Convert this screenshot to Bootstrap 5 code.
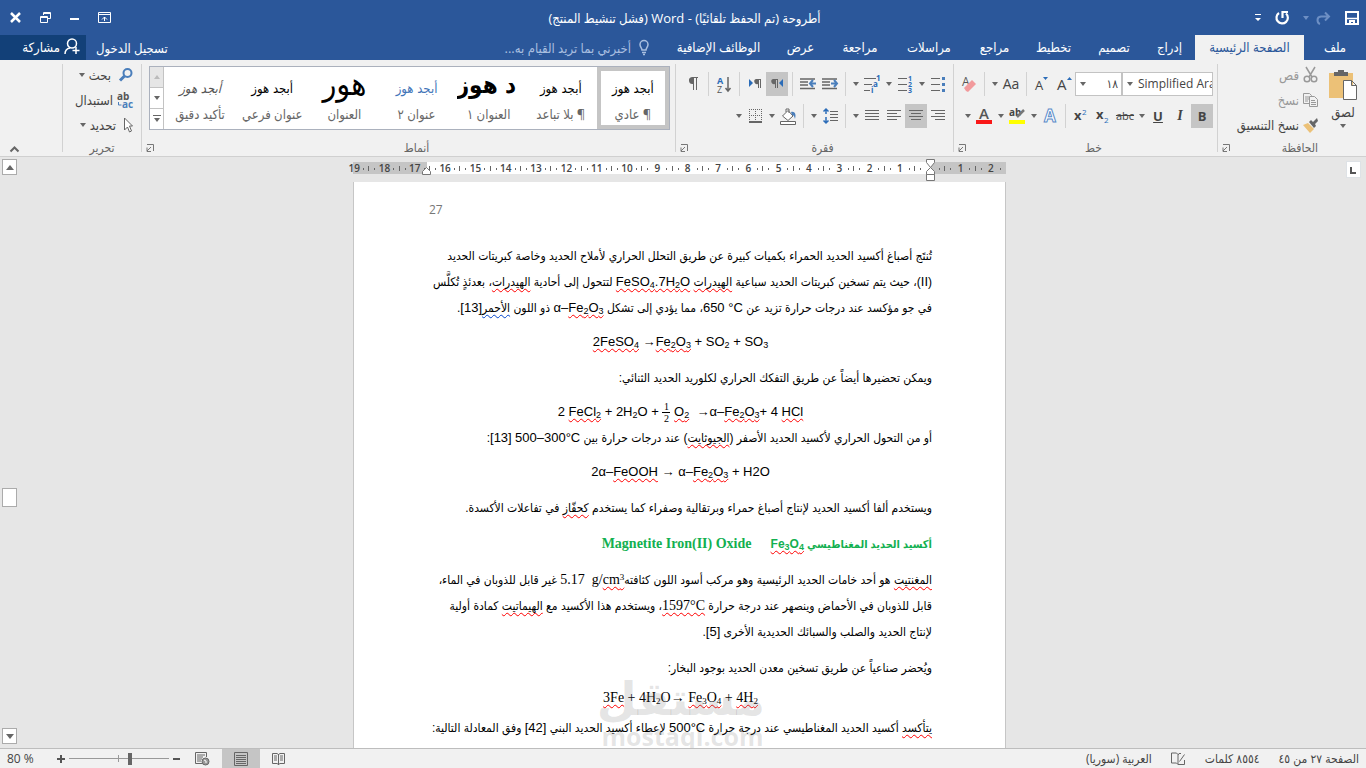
<!DOCTYPE html>
<html lang="ar" dir="rtl">
<head>
<meta charset="utf-8">
<meta name="viewport" content="width=device-width, initial-scale=1">
<title>أطروحة - Word</title>
<link href="https://cdn.jsdelivr.net/npm/bootstrap@5.3.0/dist/css/bootstrap.min.css" rel="stylesheet">
<style>
:root{--blue:#2b579a;--ink:#444;--chrome:#f1f1f1;--line:#d2d2d2;--on:#c5c5c5}
body{font-family:"Open Sans","DejaVu Sans Condensed","DejaVu Sans",sans-serif;font-size:13px;line-height:16px;color:var(--ink);background:#e6e6e6;overflow:hidden}
button{border:0;background:none;padding:0;color:inherit;font:inherit;line-height:inherit;white-space:nowrap}
svg{display:block;flex:none;direction:ltr;overflow:visible}
.titlebar{background:var(--blue);color:#fff;height:35px}
.side{flex:1 1 0;height:26px}
.quick{padding-right:7px;gap:14px}
.winbtns{padding-left:10px;gap:19px}
.redo{gap:7px}
.tabs{background:var(--blue);color:#fff;height:25px}
.tabgrid{display:grid;grid-template-columns:62px 109px 51px 60px 61px 57px 74px 64px 55px 109px;height:25px}
.tabgrid button{height:25px;padding-bottom:2px}
.tabgrid .on{background:var(--chrome);color:var(--blue)}
.tell{color:#a9bfe0;margin-right:15px}
.signin{padding:0 14px 0 10px}
.share{background:#124078;width:86px;height:25px;padding:0 6px 2px 0}
.ribbon{background:var(--chrome);height:97px;border-bottom:1px solid #d0d0d0;padding-top:4px}
.grp{position:relative;height:88px;border-left:1px solid var(--line);flex:none;padding:0 4px}
.cap{position:absolute;bottom:-4px;left:16px;right:0;text-align:center;color:#666;font-size:12px}
.g-edit .cap{left:0}
.g-clip .cap{right:48px;left:auto}
.launch{position:absolute;bottom:-4px;left:4px}
.g-clip{width:149px;padding-right:8px}.g-font{width:264px}.g-para{width:278px}.g-edit{width:79px}.g-end{width:62px}
.paste{width:30px;padding-top:5px}
.paste span{margin:3px 0 4px}
.stack{padding:3px 10px 0 0;gap:9px}
.g-edit .stack{padding-right:4px}
.off{color:#999}
.tools{height:24px;display:flex;align-items:center;margin-top:8px}
.tb{width:22px;height:24px;display:flex;align-items:center;justify-content:center}
.tb.on{background:var(--on)}
.tb-i{font:italic 700 14px "Liberation Serif",serif}
.tb-aa{font-size:14px}
.tb-abc{font-size:11px}
.ar{width:11px;height:24px;display:flex;align-items:center;justify-content:center}
.ar::after,.caret::after{content:"";display:block;border:3px solid transparent;border-top:4px solid #666;border-bottom:0}
.vs{width:1px;height:24px;background:var(--line);margin:0 4px}
.pick{position:relative;background:#fff;border:1px solid #c3c3c3;height:24px}
.pick select{appearance:none;border:0;background:none;width:100%;height:22px;padding:0 3px 0 0;font:inherit;font-size:12px;color:var(--ink);display:block}
.pick-font{width:91px}.pick-size{width:47px}
.pick-font select{padding:0 0 0 15px}
.pick::after{content:"";position:absolute;left:4px;top:9px;border:3px solid transparent;border-top:4px solid #666;border-bottom:0;pointer-events:none}
.gallery{height:64px;background:#fff;border:1px solid #abb1bd;margin:2px 1px 0 3px}
.sty{flex:1 1 0;min-width:0;height:62px;border:4px solid transparent;overflow:hidden;display:flex;flex-direction:column;align-items:center}
.sty.on{border-color:var(--on)}
.sty b{font:13px/36px "DejaVu Sans Condensed","DejaVu Sans",sans-serif;color:#000;height:35px;white-space:nowrap;display:flex;justify-content:center;width:64px;overflow:hidden}
.sty .h-one{font-size:24px;line-height:28px;font-weight:700;justify-content:flex-end}
.sty .h-two{color:#3f74b8}
.sty .h-title{font-size:32px;line-height:26px}
.sty .h-em{color:#555;font-style:italic}
.sty span{line-height:16px;color:#666}
.scr{width:14px;border-right:1px solid #c3c3c3}
.scr button{flex:1;display:flex;align-items:center;justify-content:center;border-bottom:1px solid #c3c3c3}
.scr button:first-child{background:#e6e6e6}
.fold{position:absolute;left:10px;bottom:4px}
.rulerrow{height:25px;padding:5px 25px 0 18px}
.tabsel{position:absolute;right:5px;top:4px;width:15px;height:17px}
.sheetw{width:653px;flex:none}
.ruler{height:12px;position:relative;background:linear-gradient(to left,var(--on) 76px,#fff 76px,#fff 579px,var(--on) 579px)}
.cms{display:grid;grid-template-columns:repeat(22,1fr);width:667px;font-size:10px;font-weight:600;line-height:12px;height:12px}
.cms span{text-align:center;background-image:linear-gradient(#666,#666),linear-gradient(#666,#666),linear-gradient(#666,#666);background-repeat:no-repeat;background-position:right 4px,5px 6px,24px 6px;background-size:1px 5px,1px 2px,1px 2px}
.cms span:first-child{background-size:0 0,1px 2px,1px 2px}
.cms span:last-child{background-size:1px 5px,0 0,1px 2px}
.ind0{position:absolute;right:70px;top:-3px}
.ind1{position:absolute;left:69px;top:4px}
.desk{min-height:0}
.edge{width:25px;flex:none}
.vbar{width:18px;flex:none;padding:0 1px;margin-top:-23px;position:relative}
.above{flex:315 1 0}.below{flex:223 1 0}
.sbtn{width:15px;height:16px;background:#fff;border:1px solid #ababab;display:flex;align-items:center;justify-content:center}
.thumb{height:19px}
.paper{background:#fff;border:solid #c6c6c6;border-width:0 1px;padding:20px 73px 0 75px;color:#000;font-family:"Liberation Sans","DejaVu Sans Condensed","DejaVu Sans",sans-serif;font-size:12px;line-height:26px;white-space:nowrap;position:relative;overflow:hidden}
.paper p{margin:0;height:26px;box-sizing:content-box}
.paper bdi{font-size:13px}
.paper .eq{direction:ltr;text-align:center;font-size:13px}
.paper .s1{padding-top:8px}.paper .s2{padding-top:10px}.paper .s0{padding-top:4px}
.paper .rom{font-family:"Liberation Serif","DejaVu Sans Condensed",serif;font-size:14px}
.sq{text-decoration:underline wavy #f00 1px;text-underline-offset:2px;text-decoration-skip-ink:none}
.sqb{text-decoration-color:#04c}
.paper sub,.paper sup{font-size:9px;line-height:0}
.paper .green{color:#12b050;font-size:11px}
.paper .green .sq{font-size:12px}
.gapr{margin-right:16px}
.frac{display:inline-flex;flex-direction:column;vertical-align:middle;font:10px/11px "Liberation Serif",serif;text-align:center;width:8px}
.frac span:first-child{border-bottom:1px solid #000}
.paper .pgno{direction:ltr;text-align:left;color:#777;font:12px/16px "Open Sans",sans-serif;height:41px}
.wm{position:absolute;left:246px;top:492px;width:165px;text-align:center;color:rgba(120,120,120,.2);pointer-events:none}
.wm div{font:700 46px/50px "DejaVu Sans",sans-serif}
.wm p{font:700 25px/24px "Open Sans",sans-serif;direction:ltr}
.status{height:20px;background:var(--chrome);border-top:1px solid #bdbdbd;flex:none;padding:0 7px;font-size:12px}
.stats{gap:19px}
.zoomer{gap:4px;margin-right:4px}
.pct{margin-right:19px}
.zoomr{appearance:none;width:100px;height:12px;margin:0;background:linear-gradient(#999,#999) center/1px 7px no-repeat,linear-gradient(#999,#999) center/100% 1px no-repeat;direction:ltr}
.zoomr::-webkit-slider-thumb{appearance:none;width:4px;height:12px;background:#666}
.vw{width:38px;height:19px;display:flex;align-items:center;justify-content:center}
.vw.on{background:var(--on)}
</style>
</head>
<body class="d-flex flex-column vh-100">

<header class="titlebar d-flex align-items-center">
  <div class="side quick d-flex align-items-center">
    <button aria-label="حفظ"><svg width="14" height="14" fill="none" stroke="#fff"><path d="M1 1h12v12H1z" stroke-width="2"/><path d="M2 7.500h10" stroke-width="1.500"/><path fill="#fff" stroke="none" d="M4 9h6v5H8v-3H6v3H4z"/></svg></button>
    <button class="redo d-flex align-items-center" aria-label="إعادة"><svg width="15" height="14" fill="none" stroke="#6d8fc4" stroke-width="2"><path d="M4 13c-3-1-4-7 1-7.500h8M9 1.500l4 4-4 4"/></svg><svg width="6" height="4" fill="#6d8fc4"><path d="M0 0h6L3 4z"/></svg></button>
    <button aria-label="تراجع"><svg width="14" height="15" fill="none" stroke="#fff" stroke-width="2.200"><path d="M4 3a5.700 5.700 0 1 0 7 .5M7.500 8V2H13"/></svg></button>
    <button aria-label="تخصيص"><svg width="6" height="8" fill="#fff"><path d="M0 0h6v1H0zM0 4h6L3 7z"/></svg></button>
  </div>
  <div>أطروحة (تم الحفظ تلقائيًا) - Word (فشل تنشيط المنتج)</div>
  <div class="side winbtns d-flex align-items-center justify-content-end">
    <button aria-label="خيارات عرض الشريط"><svg width="13" height="11" fill="none" stroke="#fff"><path d="M.5.5h12v10H.5zM.5 2.500h12M6.500 9V5M4 7.500l2.500-2.500L9 7.500"/></svg></button>
    <button aria-label="تصغير"><svg width="9" height="8"><path fill="#fff" d="M0 4h9v2H0z"/></svg></button>
    <button aria-label="استعادة"><svg width="11" height="11" fill="none" stroke="#fff"><path d="M3.500 3V.5h7v6H8M3 1.500h8M.5 4.500h7v6h-7zM0 5.500h8"/></svg></button>
    <button aria-label="إغلاق"><svg width="11" height="11" stroke="#fff" stroke-width="2.500"><path d="M1 1l9 9M10 1l-9 9"/></svg></button>
  </div>
</header>

<nav class="tabs d-flex align-items-center">
  <div class="tabgrid">
    <button>ملف</button><button class="on">الصفحة الرئيسية</button><button>إدراج</button><button>تصميم</button><button>تخطيط</button><button>مراجع</button><button>مراسلات</button><button>مراجعة</button><button>عرض</button><button>الوظائف الإضافية</button>
  </div>
  <button class="tell d-flex align-items-center gap-2"><svg width="10" height="15" fill="none" stroke="#a9bfe0" stroke-width="1.500"><path d="M3 10C3 8 1 7 1 4.500a4 4 0 0 1 8 0C9 7 7 8 7 10zM3 12.500h4M4 14.500h2"/></svg>أخبرني بما تريد القيام به...</button>
  <div class="flex-grow-1"></div>
  <button class="signin">تسجيل الدخول</button>
  <button class="share d-flex align-items-center gap-1"><svg width="16" height="17" fill="none" stroke="#fff" stroke-width="1.500"><circle cx="8" cy="5.500" r="4.500"/><path d="M1 16c0-3 2-5.500 5-6M12 9v7M8.500 12.500h7"/></svg>مشاركة</button>
</nav>

<section class="ribbon d-flex">
  <div class="grp g-clip d-flex">
    <button class="paste caret d-flex flex-column align-items-center"><svg width="28" height="32"><path fill="#ecc177" d="M0 4h24v25H0z"/><path fill="#666" d="M5 3h4V1h6v2h4v4H5z"/><path fill="#fff" stroke="#666" d="M14.500 11.500h8l5 5v14h-13zM22.500 11.500v5h5"/></svg><span>لصق</span></button>
    <div class="stack d-flex flex-column">
      <button class="off d-flex align-items-center gap-1"><svg width="15" height="16" fill="none" stroke="#999" stroke-width="1.500"><path d="M3 0l6 10M12 0L6 10"/><circle cx="4" cy="12" r="2.800"/><circle cx="11" cy="12" r="2.800"/></svg>قص</button>
      <button class="off d-flex align-items-center gap-1"><svg width="15" height="14" fill="#f1f1f1" stroke="#999"><path d="M.5.5h6l2 2v8h-8zM2 4h4M2 6h4M2 8h3"/><path d="M6.500 3.500h5l3 3v7h-8zM8 7.500h4M8 9.500h5M8 11.500h5"/></svg>نسخ</button>
      <button class="d-flex align-items-center gap-1"><svg width="15" height="15"><path fill="#ecc177" d="M0 7l5-2 6 6-4 4z"/><path fill="#666" d="M6 4l2-2 2 2 4-4 1 3-3 3 1 2-2 2z"/></svg>نسخ التنسيق</button>
    </div>
    <div class="cap">الحافظة</div>
    <button class="launch" aria-label="خيارات الحافظة"><svg width="8" height="16" fill="none" stroke="#777"><path d="M1 4.500h6.500V11M5 7l-4 4M1 7.500v4h4"/></svg></button>
  </div>

  <div class="grp g-font">
    <div class="tools">
      <div class="pick pick-font" dir="ltr"><select aria-label="الخط"><option>Simplified Arabic</option></select></div>
      <div class="pick pick-size"><select aria-label="حجم الخط"><option>١٨</option></select></div>
      <button class="tb" aria-label="تكبير"><svg width="15" height="18"><text x="0" y="15" font-size="15" fill="#444">A</text><path fill="#2b6cb8" d="M10 5h5l-2.500-3z"/></svg></button>
      <button class="tb" aria-label="تصغير الخط"><svg width="14" height="18"><text x="0" y="15" font-size="13" fill="#444">A</text><path fill="#2b6cb8" d="M8 2h5l-2.500 3z"/></svg></button>
      <i class="vs"></i>
      <button class="tb tb-aa">Aa</button><button class="ar" aria-label="حالة الأحرف"></button>
      <i class="vs"></i>
      <button class="tb" aria-label="مسح"><svg width="15" height="18"><text x="0" y="11" font-size="12" fill="#555">A</text><path fill="#f29a9c" d="M2 13l8-8 4 4-8 8-2-1z"/></svg></button>
    </div>
    <div class="tools">
      <button class="tb on fw-bold">B</button><button class="tb tb-i">I</button><button class="tb fw-bold text-decoration-underline">U</button><button class="ar" aria-label="أنماط التسطير"></button>
      <button class="tb tb-abc text-decoration-line-through">abc</button>
      <button class="tb" aria-label="منخفض"><svg width="14" height="16"><text x="0" y="11" font-size="13" font-weight="700" fill="#444">x</text><text x="8" y="15" font-size="8" fill="#2b6cb8">2</text></svg></button>
      <button class="tb" aria-label="مرتفع"><svg width="14" height="16"><text x="0" y="12" font-size="13" font-weight="700" fill="#444">x</text><text x="8" y="7" font-size="8" fill="#2b6cb8">2</text></svg></button>
      <i class="vs"></i>
      <button class="tb" aria-label="تأثيرات"><svg width="16" height="16"><text x="2" y="14" font-size="17" font-weight="700" fill="#fff" stroke="#5b8bc9">A</text></svg></button><button class="ar" aria-label="قائمة التأثيرات"></button>
      <button class="tb" aria-label="تمييز"><svg width="17" height="18"><text x="0" y="9" font-size="10" font-weight="700" fill="#444">ab</text><path stroke="#777" stroke-width="2.500" d="M8 10l7-7"/><path fill="#ff0" d="M0 13h16v4H0z"/></svg></button><button class="ar" aria-label="لون التمييز"></button>
      <button class="tb" aria-label="لون الخط"><svg width="16" height="18"><text x="3" y="12" font-size="15" font-weight="600" fill="#555">A</text><path fill="#f91818" d="M0 13h16v4H0z"/></svg></button><button class="ar" aria-label="ألوان"></button>
    </div>
    <div class="cap">خط</div>
    <button class="launch" aria-label="خيارات الخط"><svg width="8" height="16" fill="none" stroke="#777"><path d="M1 4.500h6.500V11M5 7l-4 4M1 7.500v4h4"/></svg></button>
  </div>

  <div class="grp g-para">
    <div class="tools">
      <button class="tb" aria-label="نقاط"><svg width="14" height="16"><path stroke="#666" d="M0 2.500h9M0 8.500h9M0 14.500h9"/><path fill="#4a7ebb" d="M11 1h3v3h-3zM11 7h3v3h-3zM11 13h3v3h-3z"/></svg></button><button class="ar" aria-label="قائمة النقاط"></button>
      <button class="tb" aria-label="ترقيم"><svg width="15" height="18"><path stroke="#666" d="M0 3.500h9M0 9.500h9M0 15.500h9"/><g font-size="7" font-weight="700" fill="#2b6cb8"><text x="10" y="6">1</text><text x="10" y="12">2</text><text x="10" y="18">3</text></g></svg></button><button class="ar" aria-label="قائمة الترقيم"></button>
      <button class="tb" aria-label="متعدد المستويات"><svg width="17" height="18"><path stroke="#666" d="M0 3.500h12M0 9.500h8M0 15.500h6"/><g font-size="8" font-weight="700" fill="#2b6cb8"><text x="12" y="6">1</text><text x="9" y="12">a</text><text x="7" y="18">i</text></g></svg></button><button class="ar" aria-label="قائمة المستويات"></button>
      <i class="vs"></i>
      <button class="tb" aria-label="إنقاص المسافة البادئة"><svg width="16" height="12"><path stroke="#666" stroke-width="1.500" d="M0 1h15M0 4h8M0 7h8M0 10.500h15"/><path fill="none" stroke="#4a7ebb" stroke-width="2" d="M9 5.500h6M12 2l3 3.500L12 9"/></svg></button>
      <button class="tb" aria-label="زيادة المسافة البادئة"><svg width="16" height="12"><path stroke="#666" stroke-width="1.500" d="M0 1h15M0 4h8M0 7h8M0 10.500h15"/><path fill="none" stroke="#4a7ebb" stroke-width="2" d="M10 5.500h6M13 2l-3 3.500L13 9"/></svg></button>
      <i class="vs"></i>
      <button class="tb on" aria-label="من اليمين إلى اليسار"><svg width="14" height="12"><path fill="#666" d="M3 1h5v9H7V2H6v8H5V6a2.500 2.500 0 0 1-2-5z"/><path fill="#2b6cb8" d="M13 1v8L9 5z"/></svg></button>
      <button class="tb" aria-label="من اليسار إلى اليمين"><svg width="14" height="12"><path fill="#666" d="M8 1h5v9h-1V2h-1v8h-1V6a2.500 2.500 0 0 1-2-5z"/><path fill="#2b6cb8" d="M1 1v8l4-4z"/></svg></button>
      <i class="vs"></i>
      <button class="tb" aria-label="فرز"><svg width="15" height="17"><text x="0" y="8" font-size="9" font-weight="700" fill="#2b6cb8">A</text><text x="0" y="17" font-size="9" fill="#555">Z</text><path fill="none" stroke="#666" stroke-width="1.500" d="M11 1v14M8.500 12l2.500 3 2.500-3"/></svg></button>
      <i class="vs"></i>
      <button class="tb" aria-label="علامات الفقرة"><svg width="10" height="14"><path fill="#666" d="M4 0h6v1H9v12H8V1H6v12H5V7a3.500 3.500 0 0 1-1-7z"/></svg></button>
    </div>
    <div class="tools">
      <button class="tb" aria-label="محاذاة لليمين"><svg width="14" height="12"><path stroke="#666" d="M0 .5h14M4 3.500h10M0 6.500h14M4 9.500h10"/></svg></button>
      <button class="tb on" aria-label="توسيط"><svg width="14" height="12"><path stroke="#666" d="M0 .5h14M2 3.500h10M0 6.500h14M2 9.500h10"/></svg></button>
      <button class="tb" aria-label="محاذاة لليسار"><svg width="14" height="12"><path stroke="#666" d="M0 .5h14M0 3.500h10M0 6.500h14M0 9.500h10"/></svg></button>
      <button class="tb" aria-label="ضبط"><svg width="14" height="12"><path stroke="#666" d="M0 .5h14M0 3.500h14M0 6.500h14M0 9.500h14"/></svg></button><button class="ar" aria-label="خيارات الضبط"></button>
      <i class="vs"></i>
      <button class="tb" aria-label="تباعد الأسطر"><svg width="15" height="16"><path stroke="#666" d="M7 3.500h8M7 6.500h8M7 9.500h8M7 12.500h8"/><path fill="none" stroke="#2b6cb8" stroke-width="1.500" d="M3 1v5M3 9v6M.5 3.500L3 1l2.500 2.500M.5 12.500L3 15l2.500-2.500"/></svg></button><button class="ar" aria-label="خيارات التباعد"></button>
      <i class="vs"></i>
      <button class="tb" aria-label="تظليل"><svg width="17" height="17"><path fill="#fff" stroke="#666" d="M2.500 8L8 2.500 13 8l-5 4.500zM6 4V1h3v4"/><path fill="#4a7ebb" d="M11 4c5-1 5 4 4 7-1-3-1-4-3-4z"/><path fill="#fff" stroke="#666" d="M.5 13.500h15v3H.5z"/></svg></button><button class="ar" aria-label="ألوان التظليل"></button>
      <button class="tb" aria-label="حدود"><svg width="13" height="14" fill="none" stroke="#666"><path stroke-dasharray="1 1" d="M0 .5h13M0 6.500h13M.5 0v13M6.500 0v13M12.500 0v13"/><path stroke-width="2" d="M0 13h13"/></svg></button><button class="ar" aria-label="خيارات الحدود"></button>
    </div>
    <div class="cap">فقرة</div>
    <button class="launch" aria-label="خيارات الفقرة"><svg width="8" height="16" fill="none" stroke="#777"><path d="M1 4.500h6.500V11M5 7l-4 4M1 7.500v4h4"/></svg></button>
  </div>

  <div class="grp flex-grow-1">
    <div class="gallery d-flex">
      <button class="sty on"><b>أبجد هوز</b><span>¶ عادي</span></button>
      <button class="sty"><b>أبجد هوز</b><span>¶ بلا تباعد</span></button>
      <button class="sty"><b class="h-one">د هوز</b><span>العنوان ١</span></button>
      <button class="sty"><b class="h-two">أبجد هوز</b><span>عنوان ٢</span></button>
      <button class="sty"><b class="h-title">هور</b><span>العنوان</span></button>
      <button class="sty"><b>أبجد هوز</b><span>عنوان فرعي</span></button>
      <button class="sty"><b class="h-em">أبجد هوز</b><span>تأكيد دقيق</span></button>
      <div class="scr d-flex flex-column">
        <button aria-label="أعلى"><svg width="6" height="4" fill="#bbb"><path d="M0 4h6L3 0z"/></svg></button>
        <button aria-label="أسفل"><svg width="6" height="4" fill="#666"><path d="M0 0h6L3 4z"/></svg></button>
        <button class="border-0" aria-label="المزيد"><svg width="8" height="8" fill="#666"><path d="M0 0h8v1H0zM1 3h6L4 7z"/></svg></button>
      </div>
    </div>
    <div class="cap">أنماط</div>
    <button class="launch" aria-label="خيارات الأنماط"><svg width="8" height="16" fill="none" stroke="#777"><path d="M1 4.500h6.500V11M5 7l-4 4M1 7.500v4h4"/></svg></button>
  </div>

  <div class="grp g-edit">
    <div class="stack d-flex flex-column">
      <button class="caret d-flex align-items-center gap-1"><svg width="14" height="14" fill="none" stroke="#4a7ebb" stroke-width="2"><circle cx="8.500" cy="5" r="4"/><path stroke-width="3" d="M5.500 8L1 12.500"/></svg><span class="me-1">بحث</span></button>
      <button class="d-flex align-items-center gap-1"><svg width="16" height="16" font-size="10" font-weight="700"><text x="0" y="8" fill="#555">ab</text><text x="5" y="16" fill="#4a7ebb">ac</text><path fill="none" stroke="#4a7ebb" d="M1.500 10v3h3"/></svg>استبدال</button>
      <button class="caret d-flex align-items-center gap-1"><svg width="13" height="16" fill="#fff" stroke="#666"><path d="M4.500 1v12l3-3 2 5 2-1-2-5h3z"/></svg>تحديد</button>
    </div>
    <div class="cap">تحرير</div>
  </div>
  <div class="g-end position-relative flex-shrink-0"><button class="fold" aria-label="طي الشريط"><svg width="9" height="6" fill="none" stroke="#666" stroke-width="2"><path d="M.5 5.500l4-4 4 4"/></svg></button></div>
</section>

<div class="rulerrow d-flex justify-content-center position-relative">
  <div class="ruler sheetw">
    <div class="cms"><span>2</span><span>1</span><span></span><span>1</span><span>2</span><span>3</span><span>4</span><span>5</span><span>6</span><span>7</span><span>8</span><span>9</span><span>10</span><span>11</span><span>12</span><span>13</span><span>14</span><span>15</span><span>16</span><span>17</span><span>18</span><span>19</span></div>
    <svg class="ind0" width="10" height="23" fill="#fff" stroke="#777"><path d="M.5.5h8v3l-4 5-4-5zM.5 15.500v-3l4-4 4 4v3zM.5 15.500h8v6h-8z"/></svg>
    <svg class="ind1" width="10" height="10" fill="#fff" stroke="#777"><path d="M.5 8.500v-3L4.500 1.500l4 4v3z"/></svg>
  </div>
  <button class="tabsel bg-white border" aria-label="نوع علامة الجدولة"><svg width="13" height="15" fill="none" stroke="#555" stroke-width="2"><path d="M4 5v6h5"/></svg></button>
</div>

<main class="desk d-flex flex-fill">
  <div class="edge"></div>
  <div class="flex-grow-1 d-flex justify-content-center">
    <article class="paper sheetw">
      <p class="pgno">27</p>
      <p>تُنتَج أصباغ أكسيد الحديد الحمراء بكميات كبيرة عن طريق التحلل الحراري لأملاح الحديد وخاصة كبريتات الحديد</p>
      <p>(<bdi>II</bdi>)، حيث يتم تسخين كبريتات الحديد سباعية <span class="sq">الهيدرات</span> <bdi class="sq" dir="ltr">FeSO<sub>4</sub>.7H<sub>2</sub>O</bdi> لتتحول إلى أحادية <span class="sq">الهيدرات</span>، بعدئذٍ تُكلَّس</p>
      <p>في جو مؤكسد عند درجات حرارة تزيد عن <bdi dir="ltr">650 °C</bdi>، مما يؤدي إلى تشكل <bdi dir="ltr">α–<span class="sq">Fe<sub>2</sub>O<sub>3</sub></span></bdi> ذو اللون <span class="sq sqb">الأحمر</span><bdi dir="ltr">[13]</bdi>.</p>
      <p class="eq s1"><span class="sq">2FeSO<sub>4</sub></span> →<span class="sq">Fe<sub>2</sub>O<sub>3</sub></span> + SO<sub>2</sub> + SO<sub>3</sub></p>
      <p class="s2">ويمكن تحضيرها أيضاً عن طريق التفكك الحراري لكلوريد الحديد الثنائي:</p>
      <p class="eq s1">2 <span class="sq">FeCl<sub>2</sub></span> + 2H<sub>2</sub>O + <span class="frac"><span>1</span><span>2</span></span> <span class="sq">O<sub>2</sub></span> &nbsp;→α–<span class="sq">Fe<sub>2</sub>O<sub>3</sub></span>+ 4 <span class="sq">HCl</span></p>
      <p>أو من التحول الحراري لأكسيد الحديد الأصفر (<span class="sq">الجيوثايت</span>) عند درجات حرارة بين <bdi dir="ltr">500–300°C</bdi> <bdi dir="ltr">[13]</bdi>:</p>
      <p class="eq s1">2α–<span class="sq">FeOOH</span> → α–<span class="sq">Fe<sub>2</sub>O<sub>3</sub></span> + H2O</p>
      <p class="s2">ويستخدم ألفا أكسيد الحديد لإنتاج أصباغ حمراء وبرتقالية وصفراء كما يستخدم <span class="sq">كحفّاز</span> في تفاعلات الأكسدة.</p>
      <p class="s2 fw-bold green">أكسيد الحديد المغناطيسي <bdi class="sq" dir="ltr">Fe<sub>3</sub>O<sub>4</sub></bdi> <bdi class="rom gapr" dir="ltr">Magnetite Iron(II) Oxide</bdi></p>
      <p class="s2"><span class="sq">المغنتيت</span> هو أحد خامات الحديد الرئيسية وهو مركب أسود اللون كثافته<bdi dir="ltr" class="rom">5.17 &nbsp;g/<span class="sq">cm<sup>3</sup></span></bdi> غير قابل للذوبان في الماء،</p>
      <p>قابل للذوبان في الأحماض وينصهر عند درجة حرارة <bdi dir="ltr" class="rom sq">1597°C</bdi>، ويستخدم هذا الأكسيد مع <span class="sq">الهيماتيت</span> كمادة أولية</p>
      <p>لإنتاج الحديد والصلب والسبائك الحديدية الأخرى <bdi dir="ltr">[5]</bdi>.</p>
      <p class="s2">ويُحضر صناعياً عن طريق تسخين معدن الحديد بوجود البخار:</p>
      <p class="eq s0 rom"><span class="sq">3Fe</span> + 4H<sub>2</sub>O→ <span class="sq">Fe<sub>3</sub>O<sub>4</sub></span> + <span class="sq">4H<sub>2</sub></span></p>
      <p class="s0"><span class="sq">يتأكسد</span> أكسيد الحديد المغناطيسي عند درجة حرارة <bdi dir="ltr">500°C</bdi> لإعطاء أكسيد الحديد البني <bdi dir="ltr">[42]</bdi> وفق المعادلة التالية:</p>
      <div class="wm"><div>مستقل</div><p>mostaqi.com</p></div>
    </article>
  </div>
  <div class="vbar d-flex flex-column">
    <button class="sbtn" aria-label="تمرير لأعلى"><svg width="8" height="5" fill="#666"><path d="M0 5h8L4 0z"/></svg></button>
    <div class="above"></div>
    <button class="sbtn thumb" aria-label="شريط التمرير"></button>
    <div class="below"></div>
    <button class="sbtn mb-1" aria-label="تمرير لأسفل"><svg width="8" height="5" fill="#666"><path d="M0 0h8L4 5z"/></svg></button>
  </div>
</main>

<footer class="status d-flex align-items-center">
  <div class="stats d-flex align-items-center">
    <span>الصفحة ٢٧ من ٤٥</span>
    <span>٨٥٥٤ كلمات</span>
    <svg width="15" height="14" fill="none" stroke="#666"><path d="M7 12.500L5.500 11H.5V1h5L7 2.500zM7 3l1-1.500h2M7 12.500h6.500V8M8.500 9.500l5-7"/></svg>
    <span>العربية (سوريا)</span>
  </div>
  <div class="flex-grow-1"></div>
  <button class="vw" aria-label="وضع القراءة"><svg width="14" height="14" fill="none" stroke="#666"><path d="M6.500 12.500L5 11.500H.5v-10H5l1.500 1 1.500-1h4.500v10H8zM6.500 2v11M2 4h3M2 6h3M2 8h3M8 4h3M8 6h3M8 8h3"/></svg></button>
  <button class="vw on" aria-label="تخطيط الطباعة"><svg width="14" height="14" fill="none" stroke="#666"><path d="M.5.5h13v13H.5zM2 3.500h10M2 5.500h10M2 7.500h10M2 9.500h10M2 11.500h10"/></svg></button>
  <button class="vw" aria-label="تخطيط ويب"><svg width="15" height="14" fill="none" stroke="#666"><path d="M7 11.500H.5V.5h11V5M2 3h8M2 5h6M2 7h5M2 9h4"/><circle cx="10.500" cy="9.500" r="3.500" fill="#999"/><path stroke="#fff" d="M9 8l2 1v2"/></svg></button>
  <div class="zoomer d-flex align-items-center">
    <button aria-label="تصغير العرض"><svg width="7" height="8"><path fill="#555" d="M0 3h7v2H0z"/></svg></button>
    <input type="range" class="zoomr" min="0" max="100" value="62" aria-label="تكبير/تصغير">
    <button aria-label="تكبير العرض"><svg width="8" height="8"><path fill="#555" d="M0 3h8v2H0zM3 0h2v8H3z"/></svg></button>
    <span class="pct" dir="ltr">80 %</span>
  </div>
</footer>
<script src="https://cdn.jsdelivr.net/npm/bootstrap@5.3.0/dist/js/bootstrap.bundle.min.js"></script>
</body>
</html>
